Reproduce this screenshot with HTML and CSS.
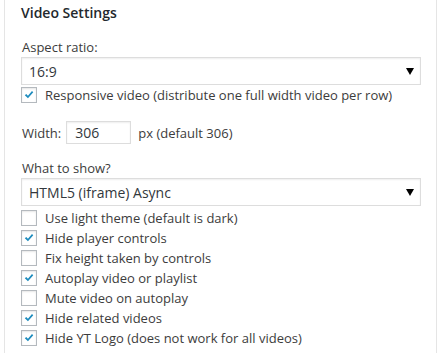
FILE: index.html
```html
<!doctype html>
<html lang="en">
  <head>
    <meta charset="utf-8">
    <title>Video Settings</title>
    <link rel="stylesheet" href="styles.css">
  </head>

  <body>
    <div class="panel">
      <h3>Video Settings</h3>

      <p class="field">
        <label for="ratio">Aspect ratio:</label>
        <span class="select">
          <select id="ratio">
            <option>16:9</option>
            <option>4:3</option>
          </select>
        </span>
      </p>

      <label class="check"><input type="checkbox" checked><span class="box"></span>Responsive video (distribute one full width video per row)</label>

      <p class="width">
        <label for="width">Width:</label>
        <input id="width" type="text" value="306">
        <span>px (default 306)</span>
      </p>

      <p class="field">
        <label for="show">What to show?</label>
        <span class="select">
          <select id="show">
            <option>HTML5 (iframe) Async</option>
            <option>HTML5 (iframe)</option>
          </select>
        </span>
      </p>

      <div class="checks">
        <label class="check"><input type="checkbox"><span class="box"></span>Use light theme (default is dark)</label>
        <label class="check"><input type="checkbox" checked><span class="box"></span>Hide player controls</label>
        <label class="check"><input type="checkbox"><span class="box"></span>Fix height taken by controls</label>
        <label class="check"><input type="checkbox" checked><span class="box"></span>Autoplay video or playlist</label>
        <label class="check"><input type="checkbox"><span class="box"></span>Mute video on autoplay</label>
        <label class="check"><input type="checkbox" checked><span class="box"></span>Hide related videos</label>
        <label class="check"><input type="checkbox" checked><span class="box"></span>Hide YT Logo (does not work for all videos)</label>
      </div>
    </div>
  </body>
</html>
```

FILE: styles.css
```css
body {
  margin: 0;
  background: #fff;
  color: #3c3c3c;
  font-family: "Open Sans", "Noto Sans", sans-serif;
  font-size: 13px;
}

.panel {
  width: 400px;
  height: 353px;
  margin-left: 4px;
  padding: 0 15px 0 16px;
  border-left: 1px solid #e5e5e5;
  border-right: 1px solid #e5e5e5;
}

h3 {
  margin: 0;
  padding-top: 3px;
  font-size: 14px;
  font-weight: 600;
  line-height: 20px;
  color: #23282d;
}

p {
  margin: 0;
}

.field {
  margin-top: 14px;
}

.field label {
  display: block;
  line-height: 20px;
  padding-left: 1px;
}

.select {
  display: block;
  position: relative;
}

.select::after {
  content: "";
  position: absolute;
  right: 7px;
  top: 11px;
  border-left: 4px solid transparent;
  border-right: 4px solid transparent;
  border-top: 7px solid #000;
  pointer-events: none;
}

select {
  -webkit-appearance: none;
  appearance: none;
  display: block;
  width: 400px;
  height: 28px;
  margin: 0;
  padding: 0 7px;
  border: 1px solid #ddd;
  border-radius: 0;
  background: #fff;
  box-shadow: inset 0 1px 2px rgba(0, 0, 0, 0.07);
  color: #32373c;
  font-family: inherit;
  font-size: 14px;
}

.check {
  display: flex;
  align-items: center;
  height: 20px;
  line-height: 20px;
}

.check input {
  display: none;
}

.box {
  width: 16px;
  height: 16px;
  box-sizing: border-box;
  margin-right: 8px;
  border: 1px solid #b4b9be;
  background: #fff;
  box-shadow: inset 0 1px 2px rgba(0, 0, 0, 0.1);
}

.check input:checked + .box {
  background: #fff url("data:image/svg+xml,%3Csvg xmlns='http://www.w3.org/2000/svg' viewBox='0 0 16 16'%3E%3Cpath d='M3.2 8.3l1.6-1.5 2 2.1 4.6-5.4 1.5 1.3-6.1 7z' fill='%231e8cbe'/%3E%3C/svg%3E") no-repeat center;
}

.width {
  display: flex;
  align-items: center;
  margin-top: 16px;
  padding-left: 1px;
}

.width input {
  width: 65px;
  height: 23px;
  box-sizing: border-box;
  margin: 0 7px 0 5px;
  padding: 0 8px;
  border: 1px solid #ddd;
  box-shadow: inset 0 1px 2px rgba(0, 0, 0, 0.07);
  color: #32373c;
  font-family: inherit;
  font-size: 14px;
}

.checks {
  margin-top: 2px;
}
```
